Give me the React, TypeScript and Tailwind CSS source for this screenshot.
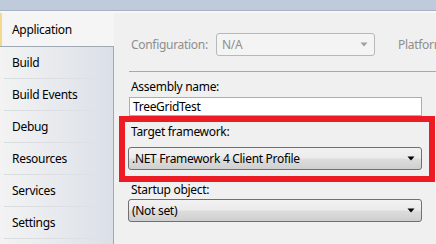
const tabs = ["Build", "Build Events", "Debug", "Resources", "Services", "Settings"];

function Arrow({ disabled }: { disabled?: boolean }) {
  return (
    <svg width="8" height="5" viewBox="0 0 8 5" className="shrink-0">
      <path d="M0.5 0.5 H7.5 L4 4.5 Z" fill={disabled ? "#a0a0a0" : "#000"} />
    </svg>
  );
}

function Combo({ value }: { value: string }) {
  return (
    <div className="flex h-[23px] items-center justify-between rounded-[3px] border border-[#707070] bg-[linear-gradient(to_bottom,#f2f2f2_0%,#ebebeb_48%,#dddddd_52%,#cfcfcf_100%)] pl-[3px] pr-[6px]">
      <span className="leading-none">{value}</span>
      <Arrow />
    </div>
  );
}

export default function App() {
  return (
    <div className="flex h-[244px] w-[436px] flex-col overflow-hidden bg-[#f0f0f0] font-['Segoe_UI','Noto_Sans',sans-serif] text-[12px] tracking-[-0.3px] text-black">
      {/* title strip */}
      <div className="h-[11px] shrink-0 border-b border-[#a7b2c3] bg-[#bfcadb]" />
      <div className="h-[2px] shrink-0 bg-[#f7f7f7]" />

      <div className="flex min-h-0 flex-1">
        {/* left tabs */}
        <div className="flex w-[114px] shrink-0 flex-col">
          <div className="flex h-[33px] items-center border-l-2 border-[#f3d98c] bg-[#f5f5f5] pl-[10px]">
            Application
          </div>
          <div className="flex flex-1 flex-col border-r border-t border-[#a0a8b4] bg-gradient-to-r from-[#f3f3f3] to-[#dbe0e8]">
            {tabs.map((t) => (
              <div key={t} className="flex h-[32px] shrink-0 flex-col">
                <div className="flex flex-1 items-center pl-[12px]">{t}</div>
                <div className="mx-[4px] h-px bg-gradient-to-r from-[#d9dbde] to-[#dfe2e7]" />
              </div>
            ))}
          </div>
        </div>

        {/* right content */}
        <div className="flex flex-1 flex-col pl-[15px] pt-[20px]">
          <div className="flex h-[23px] items-center text-[#8e8e8e]">
            <span className="w-[87px] pl-[2px]">Configuration:</span>
            <div className="flex h-[23px] w-[159px] items-center justify-between rounded-[3px] border border-[#b5b9bd] bg-[#f4f4f4] pl-[5px] pr-[6px]">
              <span>N/A</span>
              <Arrow disabled />
            </div>
            <span className="ml-[23px] whitespace-nowrap">Platform</span>
          </div>

          <div className="mt-[15px] h-px bg-[#a8a8a8]" />

          <div className="mt-[7px] flex h-[16px] items-center pl-[2px]">Assembly name:</div>
          <div className="mt-[2px] flex h-[19px] w-[293px] items-center border border-[#abadb3] bg-white pl-[3px]">
            TreeGridTest
          </div>

          <div className="-ml-[10px] flex h-[66px] w-[316px] flex-col border-[6px] border-[#ed1c24] pl-[3px] pr-[7px] pt-[2px]">
            <div className="flex h-[16px] items-center pl-[3px]">Target framework:</div>
            <div className="mt-[7px]">
              <Combo value=".NET Framework 4 Client Profile" />
            </div>
          </div>

          <div className="flex h-[16px] items-center pl-[2px]">Startup object:</div>
          <div className="mt-[1px] w-[294px] -ml-[1px]">
            <Combo value="(Not set)" />
          </div>
        </div>
      </div>
    </div>
  );
}
